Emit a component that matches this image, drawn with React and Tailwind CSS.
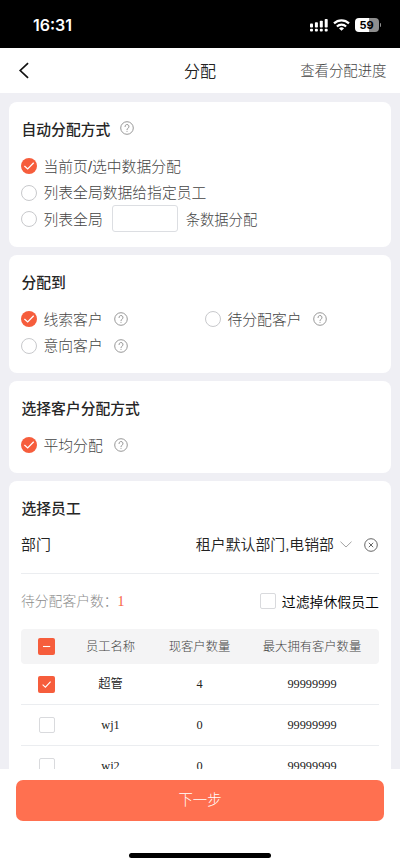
import { useState } from 'react';

const employees = [
  { name: '超管', current: 4, max: 99999999 },
  { name: 'wj1', current: 0, max: 99999999 },
  { name: 'wj2', current: 0, max: 99999999 },
];

function HelpIcon() {
  return (
    <svg className="w-[14px] h-[14px] shrink-0" viewBox="0 0 14 14" fill="none" stroke="#8c8c8c" strokeWidth="0.9">
      <circle cx="7" cy="7" r="6.3" />
      <path d="M5 5.6a2 2 0 1 1 2.9 1.7c-.6.35-.9.7-.9 1.3" strokeLinecap="round" />
      <circle cx="7" cy="10.3" r="0.55" fill="#8c8c8c" stroke="none" />
    </svg>
  );
}

function Radio({ checked }) {
  if (!checked) {
    return <span className="w-4 h-4 rounded-full border border-[#c8c9cc] bg-white shrink-0" />;
  }
  return (
    <svg className="w-4 h-4 shrink-0" viewBox="0 0 16 16" fill="none">
      <circle cx="8" cy="8" r="8" fill="#f65d3c" />
      <path d="M3.4 7.9l3.3 3 6-6.1" stroke="#fff" strokeWidth="1.3" />
    </svg>
  );
}

function Checkbox({ checked, indeterminate, onClick }) {
  if (!checked && !indeterminate) {
    return (
      <button className="block w-4 h-4 rounded-[2px] border border-[#d9dadd] bg-white shrink-0" onClick={onClick} />
    );
  }
  return (
    <button className="block w-[17px] h-[17px] rounded-[2px] bg-[#f65d3c] shrink-0" onClick={onClick}>
      <svg className="w-[17px] h-[17px]" viewBox="0 0 17 17" fill="none" stroke="#fff" strokeWidth="1.1">
        {indeterminate ? <path d="M5 8.5h7.2" /> : <path d="M4.6 8.6l2.8 2.6 5.2-5.6" />}
      </svg>
    </button>
  );
}

function Option({ label, checked, help, onClick, children }) {
  return (
    <div className="flex items-center h-[26.4px]" onClick={onClick}>
      <Radio checked={checked} />
      <span className="ml-[6.5px] pt-[2px] text-[14.8px] text-[#444] whitespace-nowrap">{label}</span>
      {help && <span className="ml-[11.5px]"><HelpIcon /></span>}
      {children}
    </div>
  );
}

function Card({ title, help, className = '', children }) {
  return (
    <section className={`mx-[9px] px-[12px] pt-[14px] rounded-[8px] bg-white shrink-0 ${className}`}>
      <h2 className="flex items-center h-[26px] text-[14.8px] font-medium text-[#262626]">
        <span className="pt-[2px] pl-[0.5px]">{title}</span>
        {help && <span className="ml-[10px] mb-[2px]"><HelpIcon /></span>}
      </h2>
      {children}
    </section>
  );
}

function StatusBar() {
  return (
    <div className="flex items-center justify-between h-12 pl-[33px] pr-[19px] pt-[2px] bg-black text-white shrink-0">
      <span className="font-['Inter'] text-[16px] font-semibold">16:31</span>
      <div className="flex items-center gap-[5px]">
        <svg className="w-[18px] h-[13px]" viewBox="0 0 18 13" fill="#fff">
          <rect x="0" y="4.5" width="3" height="4" rx="0.8" />
          <rect x="4.9" y="3.3" width="3" height="5.2" rx="0.8" />
          <rect x="9.8" y="1.8" width="3" height="6.7" rx="0.8" />
          <rect x="14.7" y="0" width="3" height="8.5" rx="0.8" />
          <rect x="0" y="9.8" width="3" height="2.7" rx="1" />
          <rect x="4.9" y="9.8" width="3" height="2.7" rx="1" />
          <rect x="9.8" y="9.8" width="3" height="2.7" rx="1" />
          <rect x="14.7" y="9.8" width="3" height="2.7" rx="1" />
        </svg>
        <svg className="w-[17px] h-[12px]" viewBox="0 0 17 12" fill="none" stroke="#fff" strokeWidth="2.2">
          <path d="M1 4.4a10.8 10.8 0 0 1 15 0" />
          <path d="M3.9 7.5a6.7 6.7 0 0 1 9.2 0" />
          <path d="M8.5 11.8L6 9.4a3.7 3.7 0 0 1 5 0z" fill="#fff" stroke="none" />
        </svg>
        <div className="flex items-center">
          <span className="flex items-center justify-center w-6 h-[14px] rounded-[4px] bg-[linear-gradient(90deg,#fff_59%,#8e8e8e_59%)] font-['Inter'] text-[11px] leading-none font-bold text-black">
            59
          </span>
          <span className="w-[1.5px] h-[4px] ml-px rounded-r-full bg-[#8e8e8e]" />
        </div>
      </div>
    </div>
  );
}

function App() {
  const [mode, setMode] = useState('page');
  const [target, setTarget] = useState('clue');
  const [skipResting, setSkipResting] = useState(false);
  const [selected, setSelected] = useState(['超管']);

  const toggle = (name) => {
    setSelected((prev) => (prev.includes(name) ? prev.filter((n) => n !== name) : [...prev, name]));
  };

  return (
    <div className="flex flex-col w-[400px] h-[866px] overflow-hidden bg-[#efeff4] font-['Liberation_Sans','Noto_Sans_CJK_SC',sans-serif] font-light">
      <StatusBar />

      {/* Nav bar */}
      <header className="grid grid-cols-[112px_140px_1fr] items-center h-[45px] pl-[18px] pr-[13.5px] bg-white shrink-0">
        <svg className="w-3 h-[17px]" viewBox="0 0 12 18" fill="none" stroke="#111" strokeWidth="1.8">
          <path d="M10.3 1.2L2 9l8.3 7.8" />
        </svg>
        <h1 className="pt-[2px] text-center text-[16px] font-[350] text-[#222]">分配</h1>
        <span className="pt-[2px] text-right text-[14.4px] text-[#444] whitespace-nowrap">查看分配进度</span>
      </header>

      <main className="flex flex-col flex-1 min-h-0 gap-[8px] pt-[9px] overflow-hidden">
        <Card title="自动分配方式" help className="h-[145px]">
          <div className="mt-[11px]">
            <Option label="当前页/选中数据分配" checked={mode === 'page'} onClick={() => setMode('page')} />
            <Option label="列表全局数据给指定员工" checked={mode === 'all'} onClick={() => setMode('all')} />
            <Option label="列表全局" checked={mode === 'count'} onClick={() => setMode('count')}>
              <input className="w-[66px] h-[27px] ml-[9px] mr-2 px-2 border border-[#dcdee2] rounded-[3px] text-sm outline-none shrink-0" />
              <span className="pt-[3px] text-[14.3px] text-[#444] whitespace-nowrap">条数据分配</span>
            </Option>
          </div>
        </Card>

        <Card title="分配到" className="h-[118px]">
          <div className="grid grid-cols-[184px_1fr] mt-[11px]">
            <Option label="线索客户" help checked={target === 'clue'} onClick={() => setTarget('clue')} />
            <Option label="待分配客户" help checked={target === 'pending'} onClick={() => setTarget('pending')} />
            <Option label="意向客户" help checked={target === 'intent'} onClick={() => setTarget('intent')} />
          </div>
        </Card>

        <Card title="选择客户分配方式" className="h-[92px]">
          <div className="mt-[11px]">
            <Option label="平均分配" help checked />
          </div>
        </Card>

        <Card title="选择员工" className="h-[400px]">
          <div className="flex items-center h-[53px] pb-[5px] border-b border-[#ebedf0] text-[14.9px] text-[#222] font-[350] whitespace-nowrap">
            <span className="pt-[2px]">部门</span>
            <span className="ml-auto pt-[2px]">租户默认部门,电销部</span>
            <svg className="w-3 h-[7px] ml-[6px]" viewBox="0 0 12 7" fill="none" stroke="#999" strokeWidth="0.9">
              <path d="M0.5 0.7L6 6l5.5-5.3" />
            </svg>
            <svg className="w-[14px] h-[14px] ml-3 mr-px" viewBox="0 0 14 14" fill="none" stroke="#555" strokeWidth="0.9">
              <circle cx="7" cy="7" r="6.3" />
              <path d="M4.8 4.8l4.4 4.4M9.2 4.8L4.8 9.2" />
            </svg>
          </div>

          <div className="flex items-center h-[55px] text-[13.8px]">
            <span className="pt-[2px] text-[#8c8c8c]">待分配客户数：</span>
            <span className="pt-px font-['Liberation_Serif',serif] text-[#f65d3c]">1</span>
            <div className="flex items-center gap-[6px] ml-auto text-black font-[350]">
              <Checkbox checked={skipResting} onClick={() => setSkipResting(!skipResting)} />
              <span className="pt-px text-[13.9px]">过滤掉休假员工</span>
            </div>
          </div>

          {/* Employee table */}
          <div className="text-[12.3px] text-center font-['Liberation_Serif','Noto_Sans_CJK_SC',serif]">
            <div className="grid grid-cols-[51px_77px_101px_124px] items-center h-[35px] rounded-[4px] bg-[#f4f4f5] text-[#444] whitespace-nowrap">
              <span className="flex justify-center"><Checkbox indeterminate /></span>
              <span className="pt-[2px]">员工名称</span>
              <span className="pt-[2px]">现客户数量</span>
              <span className="pt-[2px]">最大拥有客户数量</span>
            </div>
            {employees.map((e) => (
              <div
                key={e.name}
                className="grid grid-cols-[51px_77px_101px_124px] items-center h-[41px] border-b border-[#ebedf0] text-[#222] font-[350]"
              >
                <span className="flex justify-center">
                  <Checkbox checked={selected.includes(e.name)} onClick={() => toggle(e.name)} />
                </span>
                <span>{e.name}</span>
                <span>{e.current}</span>
                <span>{e.max}</span>
              </div>
            ))}
          </div>
        </Card>
      </main>

      {/* Bottom action */}
      <footer className="flex flex-col items-center h-[97px] pt-[11px] px-4 bg-white shrink-0">
        <button className="w-full h-[41px] rounded-[7px] bg-[#ff7050] text-[14.4px] text-white">下一步</button>
        <div className="w-[142px] h-[5px] mt-[32px] rounded-full bg-black" />
      </footer>
    </div>
  );
}

export default App;
